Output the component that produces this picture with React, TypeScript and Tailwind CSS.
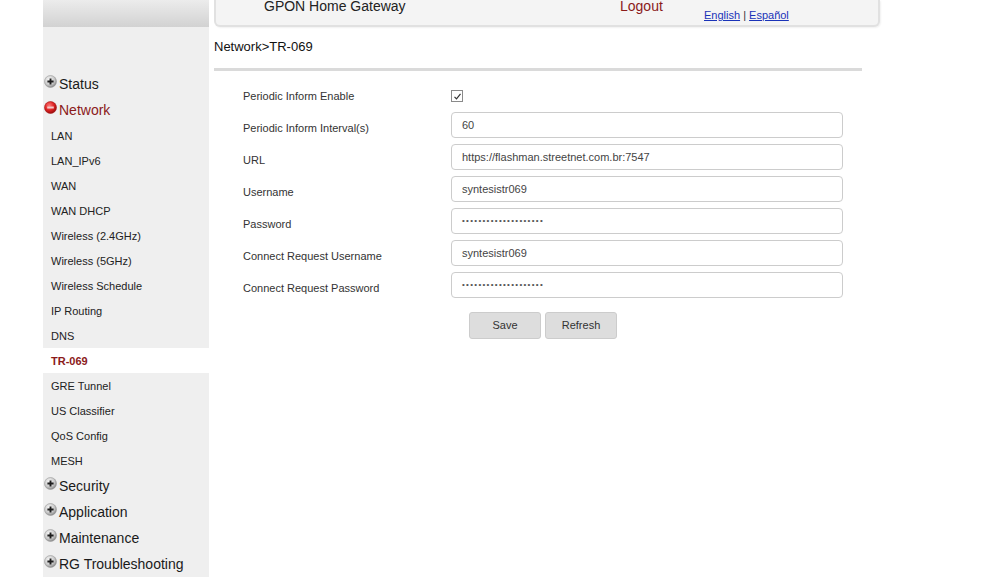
import React from 'react';

const font = { fontFamily: '"Liberation Sans", Arial, sans-serif' };

const PlusIcon: React.FC = () => (
  <svg width="13" height="13" viewBox="0 0 13 13" className="mt-[4px] shrink-0">
    <defs>
      <radialGradient id="gp" cx="40%" cy="35%" r="70%">
        <stop offset="0%" stopColor="#fbfbfb" />
        <stop offset="60%" stopColor="#c9c9c9" />
        <stop offset="100%" stopColor="#7c7c7c" />
      </radialGradient>
    </defs>
    <circle cx="6.5" cy="6.5" r="6" fill="url(#gp)" stroke="#9a9a9a" strokeWidth="0.6" />
    <path d="M6.5 3.4v6.2M3.4 6.5h6.2" stroke="#1e1e1e" strokeWidth="1.9" />
  </svg>
);

const MinusIcon: React.FC = () => (
  <svg width="13" height="13" viewBox="0 0 13 13" className="mt-[4px] shrink-0">
    <defs>
      <radialGradient id="gm" cx="40%" cy="35%" r="70%">
        <stop offset="0%" stopColor="#ff7a7a" />
        <stop offset="55%" stopColor="#dd2222" />
        <stop offset="100%" stopColor="#8e0a0a" />
      </radialGradient>
    </defs>
    <circle cx="6.5" cy="6.5" r="6" fill="url(#gm)" stroke="#a31616" strokeWidth="0.6" />
    <path d="M3.2 6.5h6.6" stroke="#f4c9c9" strokeWidth="2" />
  </svg>
);

const TopItem: React.FC<{ label: string; open?: boolean }> = ({ label, open }) => (
  <div className="h-[26px] flex items-center pl-[1px]">
    <div className="self-start">{open ? <MinusIcon /> : <PlusIcon />}</div>
    <span className={`ml-[2px] text-[14px] leading-[16px] ${open ? 'text-[#8b1a1a]' : 'text-[#1a1a1a]'}`}>
      {label}
    </span>
  </div>
);

const subItems = [
  'LAN',
  'LAN_IPv6',
  'WAN',
  'WAN DHCP',
  'Wireless (2.4GHz)',
  'Wireless (5GHz)',
  'Wireless Schedule',
  'IP Routing',
  'DNS',
  'TR-069',
  'GRE Tunnel',
  'US Classifier',
  'QoS Config',
  'MESH',
];

const dots = '•'.repeat(20);

const fields = [
  { label: 'Periodic Inform Interval(s)', value: '60' },
  { label: 'URL', value: 'https://flashman.streetnet.com.br:7547' },
  { label: 'Username', value: 'syntesistr069' },
  { label: 'Password', value: dots, pw: true },
  { label: 'Connect Request Username', value: 'syntesistr069' },
  { label: 'Connect Request Password', value: dots, pw: true },
];

export default function App() {
  return (
    <div className="w-[988px] h-[582px] bg-white overflow-hidden flex" style={font}>
      {/* Sidebar */}
      <div className="ml-[43px] w-[166px] flex flex-col">
        <div className="h-[27px] bg-gradient-to-b from-[#ececec] to-[#d2d2d2]" />
        <div className="bg-[#efefef] pt-[44px]">
          <TopItem label="Status" />
          <TopItem label="Network" open />
          {subItems.map((s) => {
            const active = s === 'TR-069';
            return (
              <div
                key={s}
                className={`h-[25px] flex items-center pl-[8px] pt-[1px] text-[11px] ${
                  active ? 'bg-white text-[#8b1a1a] font-bold' : 'text-[#222]'
                }`}
              >
                {s}
              </div>
            );
          })}
          <TopItem label="Security" />
          <TopItem label="Application" />
          <TopItem label="Maintenance" />
          <TopItem label="RG Troubleshooting" />
        </div>
      </div>

      {/* Main */}
      <div className="ml-[5px] flex flex-col">
        <div className="w-[666px] h-[27px] bg-[#f4f4f4] border-2 border-t-0 border-[#e1e1e1] rounded-b-[6px] shadow-[1px_1px_2px_rgba(0,0,0,0.06)] flex items-start">
          <span className="ml-[48px] w-[356px] text-[14px] leading-[12px] text-[#222]">GPON Home Gateway</span>
          <span className="w-[84px] text-[14px] leading-[12px] text-[#8b1a1a]">Logout</span>
          <span className="mt-[8px] text-[11px] leading-[14px] text-[#333]">
            <a className="text-[#1a33b8] underline">English</a> | <a className="text-[#1a33b8] underline">Español</a>
          </span>
        </div>

        <div className="mt-[12px] h-[16px] text-[13px] leading-[16px] text-[#111]">Network&gt;TR-069</div>
        <div className="mt-[13px] h-[3px] w-[648px] bg-[#dadada]" />

        <div className="mt-[9px] pl-[29px]">
          <div className="h-[32px] flex items-center">
            <span className="w-[208px] text-[11px] text-[#333]">Periodic Inform Enable</span>
            <span className="w-[12px] h-[12px] border border-[#8a8a8a] bg-white flex items-center justify-center">
              <svg width="9" height="9" viewBox="0 0 9 9">
                <path d="M1.5 4.8l2 2 4-5" fill="none" stroke="#333" strokeWidth="1.2" />
              </svg>
            </span>
          </div>
          {fields.map((f) => (
            <div key={f.label} className="h-[32px] flex">
              <span className="w-[208px] h-[32px] flex items-center text-[11px] text-[#333]">{f.label}</span>
              <div className="w-[392px] h-[26px] border border-[#cccccc] rounded-[4px] bg-white flex items-center pl-[10px] text-[11px] text-[#444]">
                {f.pw ? <span className="text-[8px] tracking-[1.3px] text-[#555]">{f.value}</span> : f.value}
              </div>
            </div>
          ))}
          <div className="mt-[8px] ml-[226px] flex gap-[4px]">
            <button className="w-[72px] h-[27px] bg-[#dddddd] border border-[#cccccc] rounded-[3px] text-[11px] text-[#333]">
              Save
            </button>
            <button className="w-[72px] h-[27px] bg-[#dddddd] border border-[#cccccc] rounded-[3px] text-[11px] text-[#333]">
              Refresh
            </button>
          </div>
        </div>
      </div>
    </div>
  );
}
